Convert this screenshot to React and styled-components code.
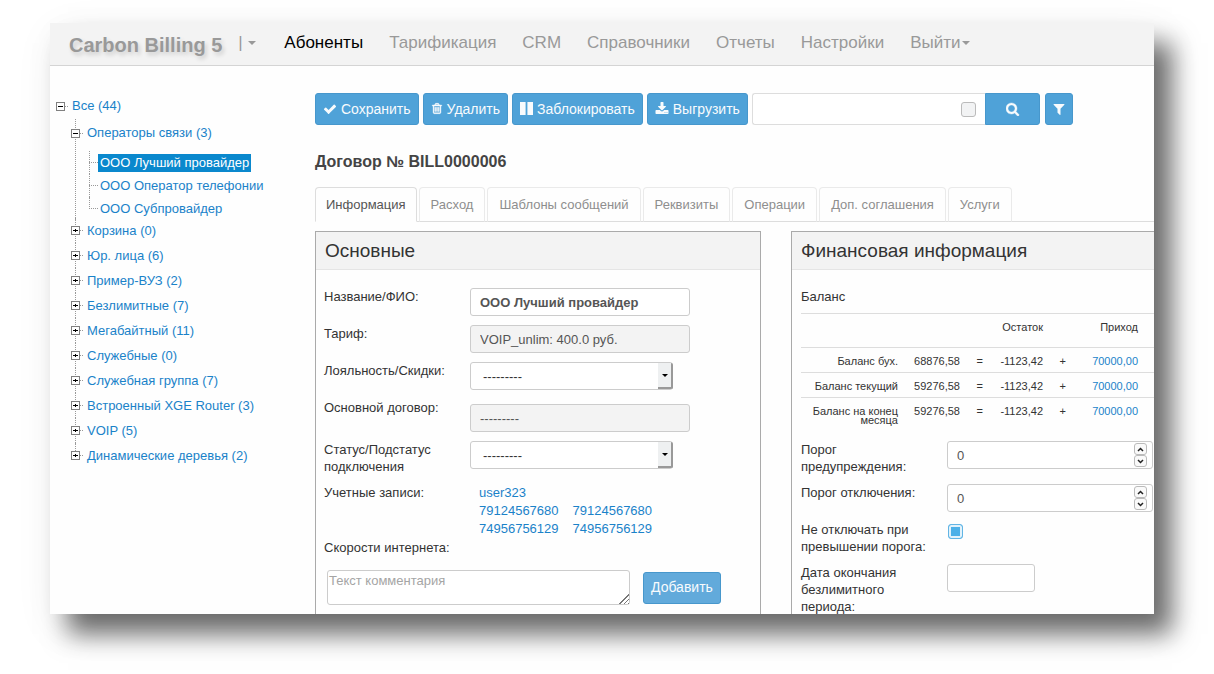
import React, { useState } from "react";
import styled, { createGlobalStyle, css } from "styled-components";

const GlobalStyle = createGlobalStyle`
  *, *::before, *::after { box-sizing: border-box; }
  body {
    margin: 0;
    background: #fff;
    color: #333;
    font: 13px/17px "Liberation Sans", Arial, sans-serif;
  }
  button, input, select, textarea { font: inherit; margin: 0; }
  a { color: #1a82c9; text-decoration: none; }
`;

const Page = styled.div`
  min-height: 100vh;
  padding: 23px 60px 60px 50px;
  overflow: hidden;
`;

const Window = styled.div`
  height: calc(100vh - 83px);
  overflow: hidden;
  display: flex;
  flex-direction: column;
  background: #fefefe;
  box-shadow: 18px 20px 24px rgba(0, 0, 0, 0.56), 6px 12px 40px rgba(0, 0, 0, 0.08);
`;

/* Top navigation */

const Header = styled.header`
  flex: none;
  display: flex;
  align-items: center;
  height: 43px;
  padding: 0 19px 3px;
  background: #f3f3f3;
  border-bottom: 1px solid #d4d4d4;
`;

const Brand = styled.a`
  color: #999;
  font-size: 20px;
  font-weight: bold;
  line-height: 24px;
  padding-top: 4px;
  text-shadow: 2px 3px 4px rgba(0, 0, 0, 0.16);
`;

const BrandMenu = styled.button`
  display: flex;
  align-items: center;
  gap: 5px;
  width: 20px;
  margin: 0 26px 0 16px;
  padding: 0;
  border: 0;
  background: none;
  color: #999;
  font-size: 17px;
  line-height: 20px;
`;

const Caret = styled.span`
  flex: none;
  border: 4px solid transparent;
  border-top-color: #999;
  border-bottom: 0;
`;

const Nav = styled.nav`
  display: flex;
  gap: 26px;
  font-size: 17px;
  line-height: 20px;
`;

const NavLink = styled.a`
  display: flex;
  align-items: center;
  gap: 1px;
  white-space: nowrap;
  color: ${(p) => (p.$active ? "#000" : "#999")};
`;

const Columns = styled.div`
  flex: 1;
  min-height: 0;
  display: grid;
  grid-template-columns: 265px minmax(0, 1fr);
`;

/* Subscriber tree */

const Sidebar = styled.aside`
  padding: 27px 0 0 6px;
`;

const TreeList = styled.ul`
  list-style: none;
  margin: ${(p) => (p.$leaf ? "0 0 -2px" : 0)};
  padding: ${(p) => (p.$leaf ? "4px 0 0 18px" : p.$nested ? "0 0 0 15px" : 0)};
`;

const TreeItem = styled.li`
  position: relative;
  ${(p) =>
    p.$line &&
    css`
      &::before {
        content: "";
        position: absolute;
        top: 0;
        bottom: 0;
        left: 4px;
        border-left: 1px dotted #999;
      }
      &:last-child::before { bottom: auto; height: 12px; }
    `}
  ${(p) =>
    p.$leaf &&
    css`
      &::before { left: 0; }
    `}
`;

const TreeRow = styled.div`
  position: relative;
  display: flex;
  align-items: center;
  height: ${(p) => p.$height}px;
  white-space: nowrap;
`;

const Toggle = styled.button`
  display: flex;
  width: 9px;
  height: 9px;
  padding: 0;
  border: 0;
  background: #fefefe;
`;

const Dots = styled.span`
  width: ${(p) => p.$width}px;
  margin-right: ${(p) => p.$gap}px;
  border-top: 1px dotted #999;
`;

const TreeLink = styled.a`
  padding: 0 2px;
  line-height: 18px;
  ${(p) =>
    p.$selected &&
    css`
      background: #0a88cd;
      color: #fff;
    `}
`;

/* Buttons and toolbar */

const Main = styled.main`
  min-width: 0;
  padding-top: 27px;
`;

const Toolbar = styled.div`
  display: flex;
  gap: 4px;
  padding-right: 81px;
`;

const Button = styled.button`
  display: inline-flex;
  align-items: center;
  justify-content: center;
  gap: 4px;
  flex: none;
  width: ${(p) => (p.$width ? `${p.$width}px` : "auto")};
  height: 32px;
  padding: 0 7px 1px;
  border: 1px solid #4797cc;
  border-radius: ${(p) => (p.$joined ? "0 3px 3px 0" : "3px")};
  background: ${(p) => (p.$soft ? "#62aadb" : "#4fa2d8")};
  color: #f8fbfd;
  font-size: 14px;
  line-height: 20px;
  white-space: nowrap;
`;

const SearchGroup = styled.form`
  display: flex;
  flex: 0 1 290px;
  margin-right: 1px;
`;

const SearchBox = styled.div`
  flex: 1;
  display: flex;
  align-items: center;
  min-width: 0;
  height: 32px;
  padding-right: 9px;
  border: 1px solid #ddd;
  border-right: 0;
  border-radius: 3px 0 0 3px;
  background: #fff;
`;

const SearchInput = styled.input`
  flex: 1;
  min-width: 0;
  height: 28px;
  padding: 0 9px;
  border: 0;
  outline: 0;
  background: none;
`;

const Check = styled.input`
  appearance: none;
  display: block;
  width: 15px;
  height: 15px;
  border: 1px solid #bbb;
  border-radius: 3px;
  background: #f2f3f4;
  &:checked {
    border-color: #62b5e5;
    background: #4cb0e8;
    box-shadow: inset 0 0 0 2px #e2f2fb;
  }
`;

const CheckSlot = styled.div`
  padding: 3px 0 0 1px;
`;

const Title = styled.h1`
  margin: 27px 0 15px;
  font-size: 16px;
  line-height: 20px;
  color: #444;
`;

/* Tabs */

const Tabs = styled.div`
  display: flex;
  gap: 2px;
  height: 35px;
  border-bottom: 1px solid #ddd;
`;

const Tab = styled.button`
  height: 35px;
  padding: 0 ${(p) => (p.$active ? 10 : 11)}px 1px;
  border: 1px solid ${(p) => (p.$active ? "#ddd" : "#eaeaea")};
  border-bottom-color: ${(p) => (p.$active ? "#fefefe" : "#ddd")};
  border-radius: 4px 4px 0 0;
  background: #fefefe;
  color: ${(p) => (p.$active ? "#555" : "#8e8e8e")};
  white-space: nowrap;
`;

/* Panels */

const Panels = styled.div`
  display: grid;
  grid-template-columns: 446px minmax(0, 1fr);
  gap: 30px;
  padding-top: 9px;
`;

const Panel = styled.section`
  min-height: 400px;
  border: 1px solid #aaa;
  ${(p) => p.$open && "border-right: 0;"}
`;

const PanelTitle = styled.h2`
  margin: 0 0 18px;
  padding: 0 9px;
  height: 38px;
  border-bottom: 1px solid #e5e5e5;
  background: #f3f3f3;
  font-size: 19px;
  font-weight: normal;
  line-height: 37px;
`;

const Fields = styled.div`
  display: flex;
  flex-direction: column;
  gap: 9px;
  padding-left: ${(p) => (p.$wide ? 9 : 8)}px;
`;

const Field = styled.div`
  display: grid;
  grid-template-columns: 130px minmax(0, 1fr);
  column-gap: 16px;
  align-items: ${(p) => (p.$low ? "end" : "start")};
  min-height: ${(p) => (p.$low ? 33 : 17)}px;
  margin-bottom: ${(p) => (p.$flush ? -8 : 0)}px;
`;

const Label = styled.label`
  align-self: start;
`;

const boxStyle = css`
  height: 28px;
  padding: 0 9px;
  border: 1px solid #ccc;
  border-radius: 3px;
  background: #fff;
  color: #555;
  outline: 0;
`;

const TextInput = styled.input`
  ${boxStyle}
  width: ${(p) => p.$width}px;
  font-weight: ${(p) => (p.$strong ? "bold" : "normal")};
  &:read-only { background: #f3f3f3; }
`;

const SelectWrap = styled.div`
  position: relative;
  width: 203px;
  height: 28px;
`;

const Select = styled.select`
  ${boxStyle}
  appearance: none;
  width: 100%;
  padding-left: 12px;
  color: #333;
`;

const SelectButton = styled.span`
  position: absolute;
  top: 1px;
  right: 0;
  bottom: 1px;
  width: 15px;
  display: flex;
  align-items: center;
  justify-content: center;
  border: solid #999;
  border-width: 0 2px 2px 0;
  border-radius: 0 2px 2px 0;
  background: #eef0f1;
  pointer-events: none;
  &::after {
    content: "";
    border: 3px solid transparent;
    border-top-color: #000;
    border-bottom: 0;
  }
`;

const Accounts = styled.div`
  display: grid;
  grid-template-columns: auto auto;
  justify-content: start;
  column-gap: 14px;
  padding-left: 9px;
  line-height: 18px;
`;

const AccountLink = styled.a`
  grid-column-start: ${(p) => (p.$first ? 1 : "auto")};
`;

const CommentRow = styled.form`
  display: flex;
  align-items: center;
  gap: 13px;
  padding: 5px 0 0 3px;
`;

const Comment = styled.textarea`
  width: 303px;
  height: 35px;
  padding: 1px;
  border: 1px solid #ccc;
  border-radius: 3px;
  background: #fff;
  outline: 0;
  &::placeholder { color: #a5a5a5; }
  &::-webkit-resizer {
    background:
      linear-gradient(135deg, #fff 54%, transparent 54%),
      repeating-linear-gradient(135deg, #fff 0 2px, #777 2px 3px);
  }
`;

const BalanceTable = styled.table`
  width: 100%;
  margin: -1px 0 1px;
  table-layout: fixed;
  border-collapse: collapse;
  font-size: 11px;
  line-height: 9px;
  text-align: right;
`;

const Cell = styled.td`
  padding: 9px 8px 6px;
  border-top: 1px solid #ddd;
  vertical-align: top;
`;

const HeadCell = styled(Cell)`
  height: 34px;
  font-weight: normal;
`;

const Col = styled.col`
  width: ${(p) => (p.$width ? `${p.$width}px` : "auto")};
`;

const NumberWrap = styled.div`
  position: relative;
  display: flex;
  margin-right: 1px;
`;

const NumberInput = styled.input`
  ${boxStyle}
  appearance: textfield;
  flex: 1;
  min-width: 0;
  &::-webkit-inner-spin-button { appearance: none; margin: 0; }
`;

const Spin = styled.div`
  position: absolute;
  top: 2px;
  right: 6px;
  display: flex;
  flex-direction: column;
`;

const SpinButton = styled.button`
  display: flex;
  align-items: center;
  justify-content: center;
  width: 13px;
  height: 12px;
  padding: 0;
  border: 1px solid #bbb;
  border-radius: 3px;
  background: #fafafa;
`;

const Svg = styled.svg`
  display: block;
  flex: none;
  fill: currentColor;
`;

const iconPaths = {
  check:
    "M1671 566q0 40-28 68l-724 724-136 136q-28 28-68 28t-68-28l-136-136-362-362q-28-28-28-68t28-68l136-136q28-28 68-28t68 28l294 295 656-657q28-28 68-28t68 28l136 136q28 28 28 68z",
  trash:
    "M704 736v576q0 14-9 23t-23 9h-64q-14 0-23-9t-9-23v-576q0-14 9-23t23-9h64q14 0 23 9t9 23zm256 0v576q0 14-9 23t-23 9h-64q-14 0-23-9t-9-23v-576q0-14 9-23t23-9h64q14 0 23 9t9 23zm256 0v576q0 14-9 23t-23 9h-64q-14 0-23-9t-9-23v-576q0-14 9-23t23-9h64q14 0 23 9t9 23zm128 724v-948h-896v948q0 22 7 40.500t14.500 27 10.500 8.500h832q3 0 10.500-8.500t14.500-27 7-40.500zm-672-1076h448l-48-117q-7-9-17-11h-317q-10 2-17 11zm928 32v64q0 14-9 23t-23 9h-96v948q0 83-47 143.500t-113 60.500h-832q-66 0-113-58.500t-47-141.500v-952h-96q-14 0-23-9t-9-23v-64q0-14 9-23t23-9h309l70-167q15-37 54-63t79-26h320q40 0 79 26t54 63l70 167h309q14 0 23 9t9 23z",
  pause: "M128 128h660v1536h-660zM1004 128h660v1536h-660z",
  download:
    "M1344 1344q0-26-19-45t-45-19-45 19-19 45 19 45 45 19 45-19 19-45zm256 0q0-26-19-45t-45-19-45 19-19 45 19 45 45 19 45-19 19-45zm128-224v320q0 40-28 68t-68 28h-1472q-40 0-68-28t-28-68v-320q0-40 28-68t68-28h465l135 136q58 56 136 56t136-56l136-136h464q40 0 68 28t28 68zm-325-569q17 41-14 70l-448 448q-18 19-45 19t-45-19l-448-448q-31-29-14-70 17-39 59-39h256v-448q0-26 19-45t45-19h256q26 0 45 19t19 45v448h256q42 0 59 39z",
  search:
    "M1152 832q0-185-131.500-316.500t-316.500-131.500-316.500 131.500-131.500 316.500 131.500 316.500 316.500 131.500 316.500-131.500 131.500-316.500zm512 832q0 52-38 90t-90 38q-54 0-90-38l-343-342q-179 124-399 124-143 0-273.500-55.500t-225-150-150-225-55.500-273.500 55.500-273.500 150-225 225-150 273.500-55.500 273.500 55.500 225 150 150 225 55.500 273.500q0 220-124 399l343 343q37 37 37 90z",
  filter:
    "M1595 295q17 41-14 70l-493 493v742q0 42-39 59-13 5-25 5-27 0-45-19l-256-256q-19-19-19-45v-486l-493-493q-31-29-14-70 17-39 59-39h1280q42 0 59 39z",
};

const Icon = ({ name, width = 14, height = 14, box = "0 0 1792 1792", weight = 0 }) => (
  <Svg width={width} height={height} viewBox={box} aria-hidden="true">
    <path d={iconPaths[name]} stroke="currentColor" strokeWidth={weight} />
  </Svg>
);

const ToggleIcon = ({ open }) => (
  <Svg width="9" height="9" viewBox="0 0 9 9" aria-hidden="true">
    <path d="M0 0h9v9h-9zM1 1v7h7v-7z" fill="#808080" fillRule="evenodd" />
    <path d={open ? "M2 4h5v1h-5z" : "M2 4h5v1h-5zM4 3h1v3h-1z"} fill="#000" />
  </Svg>
);

const Chevron = ({ up }) => (
  <Svg width="7" height="5" viewBox="0 0 7 5" aria-hidden="true">
    <path d={up ? "M1 4l2.500-2.500L6 4" : "M1 1l2.500 2.500L6 1"} fill="none" stroke="#222" strokeWidth="1.500" />
  </Svg>
);

const navItems = ["Абоненты", "Тарификация", "CRM", "Справочники", "Отчеты", "Настройки", "Выйти"];

const providers = ["ООО Лучший провайдер", "ООО Оператор телефонии", "ООО Субпровайдер"];

const groups = [
  "Операторы связи (3)",
  "Корзина (0)",
  "Юр. лица (6)",
  "Пример-ВУЗ (2)",
  "Безлимитные (7)",
  "Мегабайтный (11)",
  "Служебные (0)",
  "Служебная группа (7)",
  "Встроенный XGE Router (3)",
  "VOIP (5)",
  "Динамические деревья (2)",
];

const tabs = ["Информация", "Расход", "Шаблоны сообщений", "Реквизиты", "Операции", "Доп. соглашения", "Услуги"];

const balances = [
  ["Баланс бух.", "68876,58"],
  ["Баланс текущий", "59276,58"],
  ["Баланс на конец месяца", "59276,58"],
];

const Branch = ({ label, open, height }) => (
  <TreeRow $height={height}>
    <Toggle type="button" aria-label={label} aria-expanded={!!open}>
      <ToggleIcon open={open} />
    </Toggle>
    <Dots $width={3} $gap={2} />
    <TreeLink href="#">{label}</TreeLink>
  </TreeRow>
);

const SelectField = ({ id, label }) => (
  <Field>
    <Label htmlFor={id}>{label}</Label>
    <SelectWrap>
      <Select id={id}>
        <option>---------</option>
      </Select>
      <SelectButton />
    </SelectWrap>
  </Field>
);

const NumberField = ({ id, label }) => {
  const [value, setValue] = useState(0);
  return (
    <Field>
      <Label htmlFor={id}>{label}</Label>
      <NumberWrap>
        <NumberInput id={id} type="number" value={value} onChange={(e) => setValue(Number(e.target.value))} />
        <Spin>
          <SpinButton type="button" aria-label="Больше" onClick={() => setValue(value + 1)}>
            <Chevron up />
          </SpinButton>
          <SpinButton type="button" aria-label="Меньше" onClick={() => setValue(value - 1)}>
            <Chevron />
          </SpinButton>
        </Spin>
      </NumberWrap>
    </Field>
  );
};

export default function App() {
  const [tab, setTab] = useState(0);
  return (
    <Page>
      <GlobalStyle />
      <Window>
        <Header>
          <Brand href="#">Carbon Billing 5</Brand>
          <BrandMenu type="button" aria-label="Меню">
            |<Caret />
          </BrandMenu>
          <Nav>
            {navItems.map((item, i) => (
              <NavLink key={item} href="#" $active={i === 0}>
                {item}
                {i === navItems.length - 1 && <Caret />}
              </NavLink>
            ))}
          </Nav>
        </Header>

        <Columns>
          <Sidebar>
            <TreeList>
              <TreeItem>
                <Branch label="Все (44)" open height={26} />
                <TreeList $nested>
                  {groups.map((group, i) => (
                    <TreeItem key={group} $line>
                      <Branch label={group} open={i === 0} height={i === 0 ? 28 : 25} />
                      {i === 0 && (
                        <TreeList $leaf>
                          {providers.map((name, n) => (
                            <TreeItem key={name} $line $leaf>
                              <TreeRow $height={23}>
                                <Dots $width={9} $gap={0} />
                                <TreeLink href="#" $selected={n === 0}>
                                  {name}
                                </TreeLink>
                              </TreeRow>
                            </TreeItem>
                          ))}
                        </TreeList>
                      )}
                    </TreeItem>
                  ))}
                </TreeList>
              </TreeItem>
            </TreeList>
          </Sidebar>

          <Main>
            <Toolbar>
              <Button type="button">
                <Icon name="check" />
                Сохранить
              </Button>
              <Button type="button">
                <Icon name="trash" width={12} height={13} weight={70} />
                Удалить
              </Button>
              <Button type="button">
                <Icon name="pause" width={13} height={13} box="128 128 1536 1536" />
                Заблокировать
              </Button>
              <Button type="button">
                <Icon name="download" />
                Выгрузить
              </Button>
              <SearchGroup>
                <SearchBox>
                  <SearchInput type="text" aria-label="Поиск" />
                  <Check type="checkbox" aria-label="Точный поиск" />
                </SearchBox>
                <Button type="button" aria-label="Найти" $width={55} $joined>
                  <Icon name="search" weight={50} />
                </Button>
              </SearchGroup>
              <Button type="button" aria-label="Фильтр" $width={28}>
                <Icon name="filter" />
              </Button>
            </Toolbar>

            <Title>Договор № BILL0000006</Title>

            <Tabs role="tablist">
              {tabs.map((name, i) => (
                <Tab key={name} type="button" role="tab" aria-selected={i === tab} $active={i === tab} onClick={() => setTab(i)}>
                  {name}
                </Tab>
              ))}
            </Tabs>

            <Panels>
              <Panel>
                <PanelTitle>Основные</PanelTitle>
                <Fields>
                  <Field>
                    <Label htmlFor="name">Название/ФИО:</Label>
                    <TextInput id="name" defaultValue="ООО Лучший провайдер" $width={220} $strong />
                  </Field>
                  <Field>
                    <Label htmlFor="tariff">Тариф:</Label>
                    <TextInput id="tariff" defaultValue="VOIP_unlim: 400.0 руб." $width={220} readOnly />
                  </Field>
                  <SelectField id="loyalty" label="Лояльность/Скидки:" />
                  <Field $low>
                    <Label htmlFor="contract">Основной договор:</Label>
                    <TextInput id="contract" defaultValue="---------" $width={220} readOnly />
                  </Field>
                  <SelectField id="status" label="Статус/Подстатус подключения" />
                  <Field $flush>
                    <span>Учетные записи:</span>
                    <Accounts>
                      <AccountLink href="#">user323</AccountLink>
                      <AccountLink href="#" $first>79124567680</AccountLink>
                      <AccountLink href="#">79124567680</AccountLink>
                      <AccountLink href="#" $first>74956756129</AccountLink>
                      <AccountLink href="#">74956756129</AccountLink>
                    </Accounts>
                  </Field>
                  <span>Скорости интернета:</span>
                  <CommentRow>
                    <Comment aria-label="Комментарий" placeholder="Текст комментария" />
                    <Button type="button" $soft>
                      Добавить
                    </Button>
                  </CommentRow>
                </Fields>
              </Panel>

              <Panel $open>
                <PanelTitle>Финансовая информация</PanelTitle>
                <Fields $wide>
                  <span>Баланс</span>
                  <BalanceTable>
                    <colgroup>
                      {[105, 62, 23, 60, 23, 72, 0].map((width, i) => (
                        <Col key={i} $width={width} />
                      ))}
                    </colgroup>
                    <thead>
                      <tr>
                        <HeadCell as="th" colSpan={3} />
                        <HeadCell as="th">Остаток</HeadCell>
                        <HeadCell as="th" />
                        <HeadCell as="th">Приход</HeadCell>
                        <HeadCell as="th" />
                      </tr>
                    </thead>
                    <tbody>
                      {balances.map(([name, total]) => (
                        <tr key={name}>
                          <Cell>{name}</Cell>
                          <Cell>{total}</Cell>
                          <Cell>=</Cell>
                          <Cell>-1123,42</Cell>
                          <Cell>+</Cell>
                          <Cell>
                            <a href="#">70000,00</a>
                          </Cell>
                          <Cell />
                        </tr>
                      ))}
                    </tbody>
                  </BalanceTable>
                  <NumberField id="warn" label="Порог предупреждения:" />
                  <NumberField id="off" label="Порог отключения:" />
                  <Field>
                    <Label htmlFor="keep">Не отключать при превышении порога:</Label>
                    <CheckSlot>
                      <Check id="keep" type="checkbox" defaultChecked />
                    </CheckSlot>
                  </Field>
                  <Field>
                    <Label htmlFor="until">Дата окончания безлимитного периода:</Label>
                    <TextInput id="until" $width={88} />
                  </Field>
                </Fields>
              </Panel>
            </Panels>
          </Main>
        </Columns>
      </Window>
    </Page>
  );
}
